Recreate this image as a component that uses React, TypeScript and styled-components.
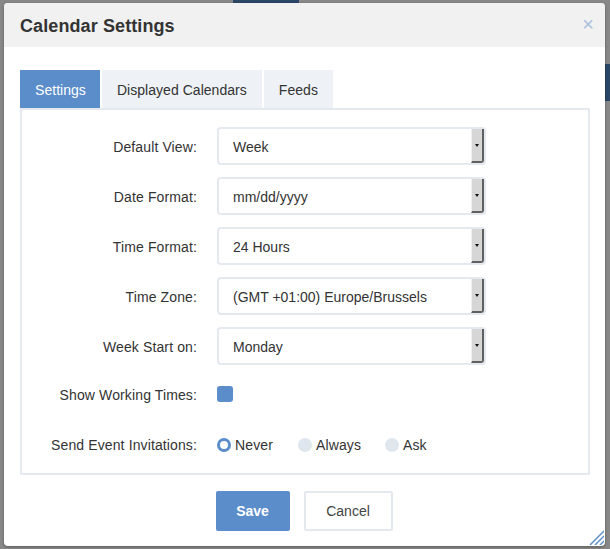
import styled, { createGlobalStyle } from "styled-components"

const GlobalStyle = createGlobalStyle`
    html, body {
        margin: 0;
        padding: 0;
        background: #888888;
        font-family: "Liberation Sans", Arial, sans-serif;
    }
`

const Page = styled.div`
    position: relative;
    width: 610px;
    height: 549px;
    overflow: hidden;
    background: #888888;
`

const BackdropBar = styled.div`
    display: flex;
    height: 3px;
    padding-left: 233px;
`

const BackdropTab = styled.div`
    width: 66px;
    background: #2a4766;
`

const BackdropSide = styled.div`
    position: absolute;
    right: 0;
    top: 64px;
    width: 6px;
    height: 37px;
    background: #2a4766;
`

const Dialog = styled.div`
    position: absolute;
    left: 4px;
    top: 3px;
    width: 601px;
    height: 543px;
    background: #fff;
    border-radius: 4px;
    display: flex;
    flex-direction: column;
    box-shadow: 0 1px 3px rgba(0, 0, 0, 0.35);
    overflow: hidden;
`

const Header = styled.div`
    display: flex;
    align-items: center;
    justify-content: space-between;
    height: 44px;
    padding: 2px 11px 0 16px;
    box-sizing: border-box;
    background: #f1f1f1;
`

const Title = styled.h2`
    margin: 0;
    font-size: 18px;
    font-weight: bold;
    color: #333;
    letter-spacing: 0.1px;
`

const Close = styled.span`
    font-size: 20px;
    color: #a8c0dc;
    line-height: 1;
    margin-top: -4px;
`

const Body = styled.div`
    display: flex;
    flex-direction: column;
    padding: 23px 15px 0 16px;
`

const Tabs = styled.div`
    display: flex;
    height: 38px;
    gap: 2px;
`

const Tab = styled.div<{ $active?: boolean }>`
    display: flex;
    align-items: center;
    padding: 1px 15px 0;
    font-size: 14px;
    letter-spacing: 0.04px;
    background: ${p => (p.$active ? "#5a8dca" : "#eef2f6")};
    color: ${p => (p.$active ? "#fff" : "#333")};
    &:first-child { padding: 1px 14px 0 15px; }
`

const Panel = styled.div`
    display: flex;
    flex-direction: column;
    gap: 12px;
    height: 367px;
    box-sizing: border-box;
    border: 2px solid #e3e9ef;
    padding: 17px 0 0 0;
`

const Row = styled.div<{ $h?: number }>`
    display: grid;
    grid-template-columns: 175px 269px;
    column-gap: 20px;
    align-items: center;
    height: ${p => p.$h ?? 38}px;
`

const Label = styled.label`
    text-align: right;
    font-size: 14px;
    letter-spacing: 0.12px;
    color: #333;
    padding-top: 1px;
`

const Select = styled.div`
    position: relative;
    display: flex;
    align-items: center;
    height: 38px;
    box-sizing: border-box;
    border: 2px solid #e3e9ef;
    border-radius: 4px;
    padding: 1px 0 0 14px;
    font-size: 14px;
    color: #333;
`

const Arrow = styled.span`
    position: absolute;
    right: 0px;
    top: 0px;
    bottom: 0px;
    width: 13px;
    box-sizing: border-box;
    background: #d6d6d6;
    border-left: 1px solid #efefef;
    border-right: 2px solid #606060;
    border-bottom: 2px solid #606060;
    border-bottom-right-radius: 3px;
    display: flex;
    align-items: center;
    justify-content: center;
    &::after {
        content: "";
        border-left: 2.5px solid transparent;
        border-right: 2.5px solid transparent;
        border-top: 3px solid #111;
    }
`

const Checkbox = styled.span`
    width: 16px;
    height: 16px;
    border-radius: 3px;
    background: #5a8dca;
`

const Radios = styled.div`
    display: flex;
    align-items: center;
    padding-top: 2px;
`

const RadioItem = styled.span<{ $w: number }>`
    display: flex;
    align-items: center;
    gap: 4px;
    width: ${p => p.$w}px;
    font-size: 14px;
    letter-spacing: 0.12px;
    color: #333;
`

const RadioDot = styled.span<{ $on?: boolean }>`
    width: 14px;
    height: 14px;
    box-sizing: border-box;
    border-radius: 50%;
    background: ${p => (p.$on ? "#fff" : "#dfe6ee")};
    border: ${p => (p.$on ? "3px solid #5a8dca" : "none")};
`

const Footer = styled.div`
    display: flex;
    justify-content: center;
    gap: 14px;
    padding: 16px 2px 0 0;
`

const Button = styled.button<{ $primary?: boolean }>`
    height: 40px;
    padding: 0 20px;
    min-width: ${p => (p.$primary ? 74 : 89)}px;
    border-radius: 2px;
    font-family: "Liberation Sans", Arial, sans-serif;
    font-size: 14px;
    font-weight: ${p => (p.$primary ? "bold" : "normal")};
    background: ${p => (p.$primary ? "#5a8dca" : "#fff")};
    color: ${p => (p.$primary ? "#fff" : "#444")};
    border: ${p => (p.$primary ? "none" : "2px solid #e3e9ef")};
`

const Grip = styled.svg`
    position: absolute;
    right: 1px;
    bottom: 1px;
`

const selects = [
    ["Default View:", "Week"],
    ["Date Format:", "mm/dd/yyyy"],
    ["Time Format:", "24 Hours"],
    ["Time Zone:", "(GMT +01:00) Europe/Brussels"],
    ["Week Start on:", "Monday"],
]

const App = () => {
    return (
        <Page>
            <GlobalStyle />
            <BackdropBar><BackdropTab /></BackdropBar>
            <BackdropSide />
            <Dialog>
                <Header>
                    <Title>Calendar Settings</Title>
                    <Close>×</Close>
                </Header>
                <Body>
                    <Tabs>
                        <Tab $active>Settings</Tab>
                        <Tab>Displayed Calendars</Tab>
                        <Tab>Feeds</Tab>
                    </Tabs>
                    <Panel>
                        {selects.map(([label, value]) => (
                            <Row key={label}>
                                <Label>{label}</Label>
                                <Select>
                                    {value}
                                    <Arrow />
                                </Select>
                            </Row>
                        ))}
                        <Row $h={34}>
                            <Label>Show Working Times:</Label>
                            <Checkbox />
                        </Row>
                        <Row $h={42}>
                            <Label>Send Event Invitations:</Label>
                            <Radios>
                                <RadioItem $w={81}><RadioDot $on />Never</RadioItem>
                                <RadioItem $w={87}><RadioDot />Always</RadioItem>
                                <RadioItem $w={60}><RadioDot />Ask</RadioItem>
                            </Radios>
                        </Row>
                    </Panel>
                    <Footer>
                        <Button $primary>Save</Button>
                        <Button>Cancel</Button>
                    </Footer>
                </Body>
                <Grip width="16" height="16" viewBox="0 0 16 16">
                    <g stroke="#5a8dca" strokeWidth="1.5">
                        <line x1="2" y1="16" x2="16" y2="2" />
                        <line x1="7" y1="16" x2="16" y2="7" />
                        <line x1="12" y1="16" x2="16" y2="12" />
                    </g>
                </Grip>
            </Dialog>
        </Page>
    )
}

export default App
